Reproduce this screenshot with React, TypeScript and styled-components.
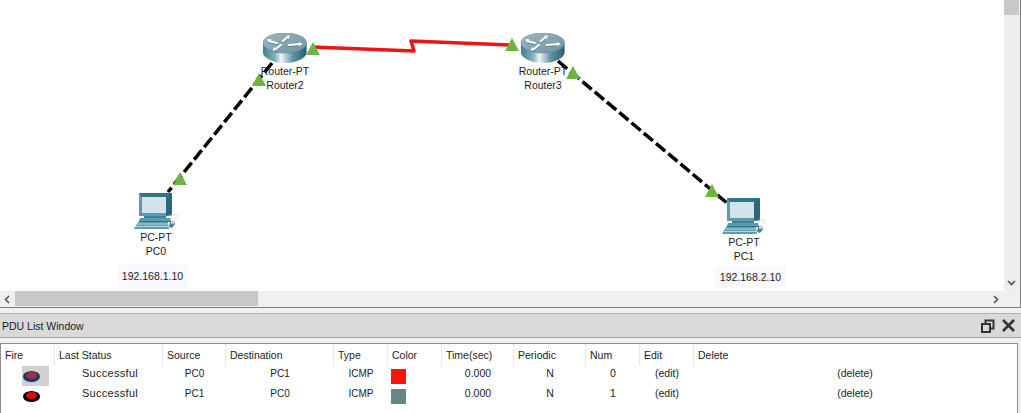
import React from 'react';
import styled, { createGlobalStyle } from 'styled-components';

const GlobalStyle = createGlobalStyle`
  html, body {
    margin: 0;
    padding: 0;
    background: #f0f0f0;
  }
  body {
    font-family: "Liberation Sans", Arial, sans-serif;
    color: #1c1c1c;
  }
`;

const COLUMNS = [
  { key: 'fire', label: 'Fire', width: 54 },
  { key: 'status', label: 'Last Status', width: 108 },
  { key: 'source', label: 'Source', width: 63 },
  { key: 'dest', label: 'Destination', width: 108 },
  { key: 'type', label: 'Type', width: 54 },
  { key: 'color', label: 'Color', width: 54 },
  { key: 'time', label: 'Time(sec)', width: 72 },
  { key: 'periodic', label: 'Periodic', width: 72 },
  { key: 'num', label: 'Num', width: 54 },
  { key: 'edit', label: 'Edit', width: 54 },
  { key: 'delete', label: 'Delete', width: 322 },
];

const PDUS = [
  { status: 'Successful', source: 'PC0', dest: 'PC1', color: '#f5160a', num: 0, selected: true },
  { status: 'Successful', source: 'PC1', dest: 'PC0', color: '#6a8585', num: 1, selected: false },
];

const LIGHTS = [
  [313, 42],
  [259, 73],
  [180, 172],
  [512, 38],
  [573, 66],
  [712, 184],
];

const RouterIcon = () => (
  <svg width="44" height="30" viewBox="0 0 44 30">
    <defs>
      <linearGradient id="routerSide" x1="0" x2="1" y1="0" y2="0">
        <stop offset="0" stopColor="#3f7d8e" />
        <stop offset="0.28" stopColor="#86b0bc" />
        <stop offset="0.42" stopColor="#eef5f7" />
        <stop offset="0.68" stopColor="#5f93a3" />
        <stop offset="1" stopColor="#285f70" />
      </linearGradient>
      <linearGradient id="routerTop" x1="0" x2="1" y1="0" y2="1">
        <stop offset="0" stopColor="#9db6c1" />
        <stop offset="1" stopColor="#7093a3" />
      </linearGradient>
    </defs>
    <path d="M0 10v9c0 6 10 11 22 11s22-5 22-11v-9z" fill="url(#routerSide)" />
    <ellipse cx="22" cy="10" rx="22" ry="10" fill="url(#routerTop)" stroke="#5f8797" strokeWidth="0.6" />
    <g fill="none" strokeLinecap="round" strokeWidth="2.200">
      <path d="M6 8l8 2M20 8l5-4M26 12l12-1M13 16l5-4" stroke="#3f6878" strokeOpacity="0.55" transform="translate(0 1)" />
      <path d="M6 8l8 2M20 8l5-4M26 12l12-1M13 16l5-4" stroke="#fff" />
    </g>
    <path d="M4 6l5 .5-2 3zM27 2l-1 4-3-2.500zM40 11l-4 2.500v-4.500zM10 18l1-4 3 2.500z" fill="#fff" />
  </svg>
);

const PcIcon = () => (
  <svg width="44" height="36" viewBox="0 0 44 36">
    <rect x="5" y="0" width="33" height="23" fill="#5b9bb0" />
    <path d="M5 0h33l-6 4H8z" fill="#2f7389" />
    <path d="M32 4l6-4v21l-6 2z" fill="#2a687e" />
    <rect x="8" y="4" width="24" height="16" fill="#d3e3ea" />
    <path d="M10 23h22v2H10z" fill="#3f8197" />
    <path d="M6 25h30l1 3H5z" fill="#5d9cb0" />
    <path d="M5 28h32v1H5z" fill="#2f7389" />
    <path d="M4 29h30l1 7H0z" fill="#5d9cb0" />
    <path d="M3 31h31M2 33.500h33" stroke="#d6e6ec" strokeWidth="0.8" />
    <path d="M36 25c2-3 5-4 7-3s0 3-3 4" fill="none" stroke="#e8eef0" strokeWidth="1.400" />
    <path d="M36 29l4-1 1 3-3 4-3-1z" fill="#4f8293" />
    <path d="M37 29l3-.5.500 1.500-3 1z" fill="#e6eef1" />
  </svg>
);

const DEVICES = [
  { id: 'router2', x: 285, y: 33, model: 'Router-PT', name: 'Router2', icon: <RouterIcon /> },
  { id: 'router3', x: 543, y: 33, model: 'Router-PT', name: 'Router3', icon: <RouterIcon /> },
  { id: 'pc0', x: 156, y: 193, model: 'PC-PT', name: 'PC0', icon: <PcIcon /> },
  { id: 'pc1', x: 744, y: 198, model: 'PC-PT', name: 'PC1', icon: <PcIcon /> },
];

const App: React.FC = () => {
  return (
    <Page>
      <GlobalStyle />
      <Workspace>
        <CanvasRow>
          <Canvas>
            <Overlay width="1004" height="291">
              <polyline points="272,63 168,192" fill="none" stroke="#000" strokeWidth="3.500" strokeDasharray="12 4" />
              <polyline points="558,61 727,203" fill="none" stroke="#000" strokeWidth="3.500" strokeDasharray="12 4" />
              <polyline points="312,47 414,51 411,41 512,45" fill="none" stroke="#ee1414" strokeWidth="3.500" strokeLinejoin="round" />
            </Overlay>
            {DEVICES.map((device) => (
              <Device key={device.id} $x={device.x} $y={device.y}>
                {device.icon}
                <DeviceModel>{device.model}</DeviceModel>
                <DeviceName>{device.name}</DeviceName>
              </Device>
            ))}
            <Overlay width="1004" height="291">
              {LIGHTS.map(([x, y]) => (
                <polygon key={`${x}-${y}`} points={`${x},${y} ${x + 7},${y + 13} ${x - 7},${y + 13}`} fill="#6cb543" />
              ))}
            </Overlay>
            <Note $x={117} $y={265}>192.168.1.10</Note>
            <Note $x={715} $y={266}>192.168.2.10</Note>
          </Canvas>
          <VScroll>
            <VThumb />
            <ScrollArrow width="9" height="6" viewBox="0 0 9 6">
              <path d="M1 1l3.500 3.500L8 1" fill="none" stroke="#555" strokeWidth="1.600" />
            </ScrollArrow>
          </VScroll>
        </CanvasRow>
        <HScroll>
          <ScrollArrow width="6" height="9" viewBox="0 0 6 9">
            <path d="M5 1L1.500 4.500 5 8" fill="none" stroke="#555" strokeWidth="1.600" />
          </ScrollArrow>
          <HThumb />
          <ScrollArrow width="6" height="9" viewBox="0 0 6 9">
            <path d="M1 1l3.500 3.500L1 8" fill="none" stroke="#555" strokeWidth="1.600" />
          </ScrollArrow>
        </HScroll>
      </Workspace>

      <TitleBar>
        <Title>PDU List Window</Title>
        <WindowButtons>
          <svg width="14" height="14" viewBox="0 0 14 14">
            <path d="M4.500 4V1.500h8v8H9" fill="none" stroke="#333" strokeWidth="2" />
            <rect x="1" y="5" width="8" height="8" fill="none" stroke="#333" strokeWidth="2" />
          </svg>
          <svg width="13" height="13" viewBox="0 0 13 13">
            <path d="M1 1l11 11M12 1L1 12" fill="none" stroke="#333" strokeWidth="2.600" />
          </svg>
        </WindowButtons>
      </TitleBar>

      <ListPanel>
        <HeaderRow>
          {COLUMNS.map((column) => (
            <HeaderCell key={column.key} $width={column.width}>
              {column.label}
            </HeaderCell>
          ))}
        </HeaderRow>
        {PDUS.map((pdu) => (
          <PduRow key={pdu.num}>
            <Cell $width={54} $align="flex-start">
              <FireButton $selected={pdu.selected}>
                <svg width="17" height="11" viewBox="0 0 17 11">
                  <ellipse cx="8.500" cy="5.500" rx="8.500" ry="5.500" fill={pdu.selected ? '#1f3a5c' : '#000'} />
                  <ellipse cx="8.500" cy="4.500" rx="5.500" ry="3.500" fill={pdu.selected ? '#a0304a' : '#e80808'} />
                </svg>
              </FireButton>
            </Cell>
            <StatusCell $width={108}>{pdu.status}</StatusCell>
            <NarrowCell $width={63}>{pdu.source}</NarrowCell>
            <NarrowCell $width={108}>{pdu.dest}</NarrowCell>
            <NarrowCell $width={54}>ICMP</NarrowCell>
            <Cell $width={54} $align="flex-start">
              <Swatch $color={pdu.color} />
            </Cell>
            <Cell $width={72}>0.000</Cell>
            <Cell $width={72}>N</Cell>
            <Cell $width={54}>{pdu.num}</Cell>
            <Cell $width={54}>(edit)</Cell>
            <Cell $width={322}>(delete)</Cell>
          </PduRow>
        ))}
      </ListPanel>
    </Page>
  );
};

export default App;

const Page = styled.div`
  width: 1021px;
  height: 413px;
  overflow: hidden;
  display: flex;
  flex-direction: column;
  background: #f0f0f0;
  font-size: 10.5px;
`;

const Workspace = styled.div`
  height: 307px;
  border-right: 1px solid #7c7c84;
  border-bottom: 1px solid #7c7c84;
  display: flex;
  flex-direction: column;
  background: #f0f0f0;
`;

const CanvasRow = styled.div`
  flex: 1;
  display: flex;
  min-height: 0;
`;

const Canvas = styled.div`
  position: relative;
  width: 1004px;
  background: #fff;
  overflow: hidden;
`;

const Overlay = styled.svg`
  position: absolute;
  left: 0;
  top: 0;
`;

const Device = styled.div<{ $x: number; $y: number }>`
  position: absolute;
  left: ${({ $x }) => $x}px;
  top: ${({ $y }) => $y}px;
  transform: translateX(-50%);
  display: flex;
  flex-direction: column;
  align-items: center;
  line-height: 14px;
  white-space: nowrap;

  svg {
    display: block;
  }
`;

const DeviceModel = styled.div`
  margin-top: 1px;
`;

const DeviceName = styled.div``;

const Note = styled.div<{ $x: number; $y: number }>`
  position: absolute;
  left: ${({ $x }) => $x}px;
  top: ${({ $y }) => $y}px;
  width: 71px;
  height: 22px;
  line-height: 22px;
  text-align: center;
  background: #f8f8fe;
  color: #1a1a2a;
`;

const VScroll = styled.div`
  width: 15px;
  margin-right: 1px;
  display: flex;
  flex-direction: column;
  align-items: center;
  background: #eeeeee;
`;

const VThumb = styled.div`
  width: 100%;
  height: 15px;
  background: #c8c8c8;
  margin-bottom: auto;
`;

const ScrollArrow = styled.svg`
  flex: none;
  margin: 0 0 5px;
`;

const HScroll = styled.div`
  height: 16px;
  display: flex;
  align-items: center;
  padding: 0 21px 0 4px;
  background: #f0f0f0;

  svg {
    margin: 0;
  }
`;

const HThumb = styled.div`
  width: 243px;
  height: 15px;
  margin: 0 auto 1px 5px;
  background: #c8c8c8;
`;

const TitleBar = styled.div`
  margin-top: 5px;
  height: 23px;
  flex: none;
  display: flex;
  align-items: center;
  justify-content: space-between;
  padding: 0 6px 0 2px;
  background: #d9d9d9;
  border-top: 1px solid #b0b0b0;
  border-bottom: 1px solid #a4a4a4;
`;

const Title = styled.span`
  font-size: 10.5px;
`;

const WindowButtons = styled.div`
  display: flex;
  align-items: center;
  gap: 7px;
`;

const ListPanel = styled.div`
  margin-top: 5px;
  width: 1016px;
  flex: 1;
  background: #fff;
  border-top: 1px solid #8c8c8c;
  border-left: 1px solid #8c8c8c;
  border-right: 1px solid #8c8c8c;
`;

const HeaderRow = styled.div`
  display: flex;
  height: 22px;
`;

const HeaderCell = styled.div<{ $width: number }>`
  flex: none;
  box-sizing: border-box;
  width: ${({ $width }) => $width}px;
  padding-left: 4px;
  line-height: 22px;
  border-right: 1px solid #e8e8e8;
  white-space: nowrap;

  &:last-child {
    border-right: none;
  }
`;

const PduRow = styled.div`
  display: flex;
  height: 20px;
`;

const Cell = styled.div<{ $width: number; $align?: string }>`
  flex: none;
  box-sizing: border-box;
  width: ${({ $width }) => $width}px;
  display: flex;
  align-items: flex-start;
  justify-content: ${({ $align }) => $align || 'center'};
  line-height: 14px;
  white-space: nowrap;
`;

const StatusCell = styled(Cell)`
  font-size: 11px;
  letter-spacing: 0.3px;
  padding-left: 2px;
`;

const NarrowCell = styled(Cell)`
  font-size: 10px;
  padding-top: 1px;
`;

const FireButton = styled.div<{ $selected: boolean }>`
  width: 27px;
  height: 20px;
  margin-left: 21px;
  padding: 5px 0 0 1px;
  box-sizing: border-box;
  background: ${({ $selected }) => ($selected ? '#d0d0d0' : 'transparent')};

  svg {
    display: block;
  }
`;

const Swatch = styled.div<{ $color: string }>`
  width: 15px;
  height: 15px;
  margin: 3px 0 0 3px;
  background: ${({ $color }) => $color};
`;
